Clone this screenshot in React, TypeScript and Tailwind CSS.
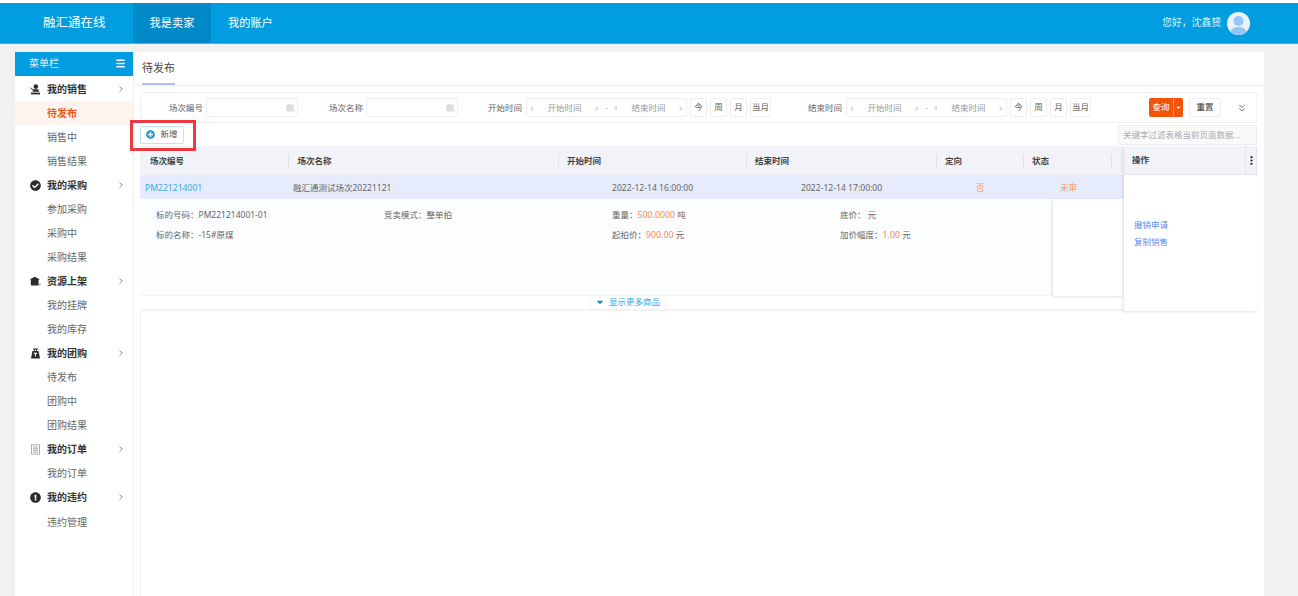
import React from "react";
import { ChevronRight, ChevronsDown, Menu } from "lucide-react";
import { FaCheckCircle, FaExclamationCircle, FaPlusCircle } from "react-icons/fa";
import { FaCaretDown, FaCaretLeft, FaCaretRight } from "react-icons/fa";

// hand drawn, the icon packs have nothing close to these
const SellerIcon = () => (
  <svg width="11" height="11" viewBox="0 0 11 11" fill="currentColor">
    <circle cx="5.8" cy="2.6" r="2.3" />
    <path d="M3.4 5.2h4.8l1 2.6H2.4z" />
    <path d="M0.4 3.4l3 2.2-0.5 0.7L0 4.1z" />
    <rect x="1" y="8.6" width="9" height="1.8" />
  </svg>
);

const StockIcon = () => (
  <svg width="11" height="11" viewBox="0 0 11 11" fill="currentColor">
    <path d="M4.8 0.8L9.6 3.2 8.6 3.8V9.4H0.8V3.8L0 3.2z" />
    <path d="M9.2 7.6h1.4v2H9.2z" opacity="0.45" />
  </svg>
);

const WeightIcon = () => (
  <svg width="11" height="11" viewBox="0 0 11 11" fill="currentColor">
    <path fillRule="evenodd" d="M3.2 0.6h4.6v1.2h-1v1.2h1.8l1.4 7.4H1l1.4-7.4h1.8V1.8h-1zM5 1.8v1.2h1V1.8z" />
    <path d="M3.8 4.8h3.4v1.1H6v2.6H5V5.9H3.8z" fill="#fff" />
  </svg>
);

const OrderIcon = () => (
  <svg width="11" height="11" viewBox="0 0 11 11" fill="none" stroke="currentColor" strokeWidth="0.8">
    <rect x="1.4" y="0.9" width="8.2" height="9.2" />
    <path d="M3 3h5M3 4.7h5M3 6.4h5M3 8.1h5" />
  </svg>
);

const FieldIcon = () => (
  <svg width="11" height="10" viewBox="0 0 11 10" fill="currentColor">
    <path d="M5 0.6L9.6 3 8.8 3.6V8.6H1.2V3.6L0.4 3z" />
    <path d="M9 6.8h1.4v1.8H9z" opacity="0.6" />
  </svg>
);

const menu = [
  { title: "我的销售", icon: <SellerIcon />, items: ["待发布", "销售中", "销售结果"] },
  { title: "我的采购", icon: <FaCheckCircle className="text-[11px]" />, items: ["参加采购", "采购中", "采购结果"] },
  { title: "资源上架", icon: <StockIcon />, items: ["我的挂牌", "我的库存"] },
  { title: "我的团购", icon: <WeightIcon />, items: ["待发布", "团购中", "团购结果"] },
  { title: "我的订单", icon: <span className="text-[#9a9a9a]"><OrderIcon /></span>, items: ["我的订单"] },
  { title: "我的违约", icon: <FaExclamationCircle className="text-[11px]" />, items: ["违约管理"] },
];

function Sidebar() {
  return (
    <aside className="w-[118px] shrink-0 bg-white">
      <div className="mb-px flex h-[24px] items-center justify-between bg-[#009ee0] pb-[2px] pl-[14px] pr-[7px] text-[10px] text-[#d9f1fb]">
        <span>菜单栏</span>
        <Menu size={11} strokeWidth={3} className="text-white" />
      </div>
      {menu.map((group, g) => (
        <div key={group.title} className={g === 5 ? "pb-px" : ""}>
          <div className="flex h-[24px] items-center pl-[15px] pr-[7px] text-[10px] font-bold text-[#333]">
            <span className="flex w-[17px] text-[#2b2b2b]">{group.icon}</span>
            <span className="flex-1">{group.title}</span>
            <ChevronRight size={10} className="text-[#777]" />
          </div>
          {group.items.map((item, i) => (
            <div
              key={item}
              className={
                g === 0 && i === 0
                  ? "flex h-[24px] items-center bg-[#fff3f0] pl-[32px] text-[10px] font-bold text-[#f05a14]"
                  : g === 5
                    ? "flex h-[24px] items-center pl-[32px] pt-[2px] text-[10px] text-[#666]"
                    : "flex h-[24px] items-center pl-[32px] text-[10px] text-[#666]"
              }
            >
              {item}
            </div>
          ))}
        </div>
      ))}
    </aside>
  );
}

function TextField({ label, className }: { label: string; className: string }) {
  return (
    <div className={`flex items-center ${className}`}>
      <span className="w-[33px] whitespace-nowrap pt-px text-[8.5px] text-[#666]">{label}</span>
      <div className="ml-[4px] flex h-[19px] w-[92px] items-center justify-end rounded-[2px] border border-[#eeeeee] pr-[1px] text-[#dedede]">
        <FieldIcon />
      </div>
    </div>
  );
}

function DateRange({ label, className }: { label: string; className: string }) {
  return (
    <div className={`flex items-center ${className}`}>
      <span className="w-[34px] whitespace-nowrap pt-px text-[8.5px] text-[#666]">{label}</span>
      <div className="ml-[4px] flex h-[19px] w-[161px] items-center rounded-[2px] border border-[#eeeeee] pt-px text-[8.5px] text-[#999]">
        <FaCaretLeft className="text-[9px] text-[#ddd]" />
        <span className="w-[59px] text-center">开始时间</span>
        <FaCaretRight className="text-[9px] text-[#ddd]" />
        <span className="mx-[3px] text-[#bbb]">-</span>
        <FaCaretLeft className="text-[9px] text-[#ddd]" />
        <span className="w-[59px] text-center">结束时间</span>
        <FaCaretRight className="text-[9px] text-[#ddd]" />
      </div>
      <div className="ml-[3px] flex gap-[3px] text-[8.5px] text-[#666]">
        {["今", "周", "月"].map((t) => (
          <span key={t} className="flex h-[19px] w-[17px] items-center justify-center rounded-[2px] border border-[#eeeeee]">{t}</span>
        ))}
        <span className="flex h-[19px] w-[21px] items-center justify-center rounded-[2px] border border-[#eeeeee]">当月</span>
      </div>
    </div>
  );
}

const columns = [
  { name: "场次编号", className: "w-[149px] pl-[10px]" },
  { name: "场次名称", className: "w-[270px] pl-[8.5px]" },
  { name: "开始时间", className: "w-[188px] pl-[8px]" },
  { name: "结束时间", className: "w-[190px] pl-[8px]" },
  { name: "定向", className: "w-[87px] pl-[8px]" },
  { name: "状态", className: "w-[88px] pl-[8px]" },
];

function TableHeader() {
  return (
    <div className="flex h-[29px] w-[984px] items-center bg-[#f2f3f8] text-[8.5px] font-bold text-[#444]">
      {columns.map((c) => (
        <div key={c.name} className={`flex h-[14px] items-center justify-between ${c.className}`}>
          <span className="pt-px">{c.name}</span>
          <span className="h-[14px] w-px bg-[#e0e1e6]" />
        </div>
      ))}
    </div>
  );
}

function DetailField({ children }: { children: React.ReactNode }) {
  return <div className="w-[228px] text-[8.5px] leading-[12px] text-[#666]">{children}</div>;
}

const Num = ({ children }: { children: React.ReactNode }) => <span className="text-[8.8px] text-[#f58a4b]">{children}</span>;

export default function App() {
  return (
    <div className="relative h-[596px] overflow-hidden bg-[#f1f1f1] font-['Noto_Sans','Noto_Sans_CJK_SC',sans-serif]">
      <div className="h-[3px] bg-white" />
      <header className="flex h-[41px] items-center border-b border-[#3fb2e6] bg-[#009ee0] text-white">
        <div className="w-[133px] pl-[43px] text-[12.5px]">融汇通在线</div>
        <div className="flex h-full w-[78px] items-center justify-center bg-[#0089c7] text-[11.2px]">我是卖家</div>
        <div className="ml-[17px] text-[11.2px]">我的账户</div>
        <div className="ml-auto flex items-center pr-[48px]">
          <span className="mr-[6px] text-[9.8px] text-[#d9f1fb]">您好，沈鑫赟</span>
          <svg width="23" height="23" viewBox="0 0 23 23">
            <circle cx="11.5" cy="11.5" r="11.5" fill="#e8f3fd" />
            <circle cx="11.5" cy="9" r="5" fill="#93c5f7" />
            <path d="M3.5 19.8c1.5-3.4 4.5-4.8 8-4.8s6.5 1.4 8 4.8a11.5 11.5 0 0 1-16 0z" fill="#93c5f7" />
          </svg>
        </div>
      </header>

      <div className="flex pl-[15px] pt-[8px]">
        <Sidebar />
        <main className="relative ml-px h-[544px] w-[1130px] bg-white">
          <div className="h-[34px] border-b border-[#eeeeee] pl-[8px]">
            <div className="inline-flex h-[33px] items-center border-b-2 border-[#a9c4f5] pt-[2px] text-[11px] text-[#444]">待发布</div>
          </div>

          <div className="ml-[6px] w-[1117px] pt-[6px]">
            <div className="flex h-[31px] items-center rounded-[2px] border border-[#f1f1f1]">
              <TextField label="场次编号" className="ml-[28px]" />
              <TextField label="场次名称" className="ml-[31px]" />
              <DateRange label="开始时间" className="ml-[30px]" />
              <DateRange label="结束时间" className="ml-[37px]" />
              <div className="ml-[58px] flex h-[19px] w-[34px] items-center rounded-[2px] bg-[#f25409] text-[8.5px] text-white">
                <span className="flex-1 text-center">查询</span>
                <span className="flex h-full w-[10px] items-center justify-center border-l border-[#f8905e]">
                  <FaCaretDown className="text-[7px]" />
                </span>
              </div>
              <span className="ml-[6px] flex h-[19px] w-[32px] items-center justify-center rounded-[2px] border border-[#eeeeee] text-[8.5px] font-medium text-[#555]">重置</span>
              <ChevronsDown size={12} className="ml-[15px] text-[#777]" />
            </div>

            <div className="flex h-[23px] items-center justify-between">
              <button className="flex h-[18px] w-[44px] items-center justify-center gap-[5px] rounded-[2px] border border-[#bfe4f5] text-[8.5px] text-[#555]">
                <FaPlusCircle className="text-[9px] text-[#0d9ae0]" />
                新增
              </button>
              <div className="mt-[1px] flex h-[20px] w-[139px] items-center rounded-[1px] border border-[#eeeeee] bg-[#fafafa] pl-[4px] text-[8.5px] text-[#aaa]">
                关键字过滤表格当前页面数据...
              </div>
            </div>

            <div className="relative">
              <TableHeader />
              <div className="flex h-[24px] w-[984px] items-center bg-[#e6ecfb] pt-[2px] text-[8.6px] text-[#666]">
                <span className="w-[153px] pl-[5px] text-[#3aa8e8]">PM221214001</span>
                <span className="w-[319px] text-[8.5px]">融汇通测试场次20221121</span>
                <span className="w-[189px]">2022-12-14 16:00:00</span>
                <span className="w-[175px]">2022-12-14 17:00:00</span>
                <span className="w-[84px] text-[#f5a25d]">否</span>
                <span className="text-[#f5a25d]">未审</span>
              </div>
              <div className="h-[97px] border-b border-[#f2f2f2] bg-[#fcfdff] pl-[16px] pt-[6px]">
                <div className="flex h-[20px] items-center">
                  <DetailField>标的号码：PM221214001-01</DetailField>
                  <DetailField>竞卖模式：整单拍</DetailField>
                  <DetailField>重量：<Num>500.0000</Num> 吨</DetailField>
                  <DetailField>底价： 元</DetailField>
                </div>
                <div className="flex h-[20px] items-center">
                  <DetailField>标的名称：-15#原煤</DetailField>
                  <DetailField> </DetailField>
                  <DetailField>起拍价：<Num>900.00</Num> 元</DetailField>
                  <DetailField>加价幅度：<Num>1.00</Num> 元</DetailField>
                </div>
              </div>
              <div className="flex h-[15px] justify-center border-b-2 border-[#f2f2f2] pr-[142px]">
                <span className="flex h-[14px] w-[76px] items-center justify-center gap-[4px] border-x border-[#f4f4f4] pb-[2px] text-[8.5px] text-[#3aa8e8]">
                  <FaCaretDown className="text-[10px] text-[#0d8fdc]" />
                  显示更多商品
                </span>
              </div>

              {/* fixed column overlays the table's right side */}
              <div className="absolute left-[913px] top-[53px] h-[97px] w-[70px] bg-white shadow-[-1px_1px_3px_rgba(0,0,0,0.12)]" />
              <div className="absolute right-0 top-0 h-[165px] w-[133px] bg-white shadow-[-1px_1px_3px_rgba(0,0,0,0.12)]">
                <div className="flex h-[29px] items-center justify-between border-b border-[#e4e5ea] bg-[#f2f3f8] pl-[8px] text-[8.5px] font-bold text-[#444]">
                  <span className="pt-px">操作</span>
                  <span className="flex h-full w-[12px] items-center justify-center border-x border-[#e4e5ea] text-[#222]">
                    <svg width="3" height="9" viewBox="0 0 3 9" fill="currentColor">
                      <circle cx="1.5" cy="1.2" r="1.1" />
                      <circle cx="1.5" cy="4.5" r="1.1" />
                      <circle cx="1.5" cy="7.8" r="1.1" />
                    </svg>
                  </span>
                </div>
                <div className="flex flex-col gap-[4px] pl-[10px] pt-[44px] text-[8.5px] text-[#5b8def]">
                  <span>撤销申请</span>
                  <span>复制销售</span>
                </div>
              </div>
            </div>
          </div>
          <div className="absolute bottom-0 left-[6px] top-[259px] w-px bg-[#f0f0f0]" />

          {/* annotation drawn over the 新增 button */}
          <div className="absolute left-[-4px] top-[68px] h-[31px] w-[66px] border-[3px] border-[#ea3a3f]" />
        </main>
      </div>
    </div>
  );
}
